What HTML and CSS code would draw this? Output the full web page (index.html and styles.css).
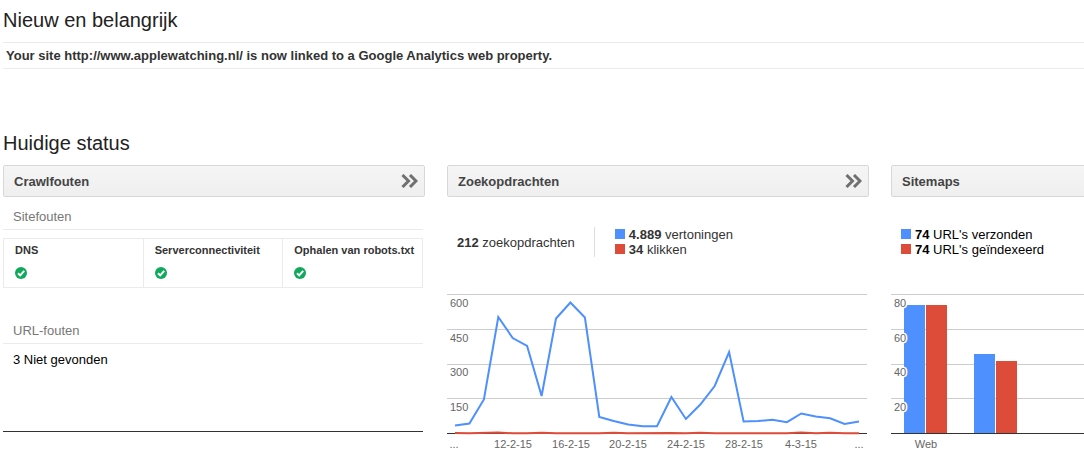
FILE: index.html
```html
<!DOCTYPE html>
<html lang="nl">
<head>
  <meta charset="UTF-8">
  <meta name="viewport" content="width=device-width, initial-scale=1.0">
  <title>Dashboard</title>
  <link rel="stylesheet" href="styles.css">
</head>
<body>
  <div class="dashboard">
    <h1>Nieuw en belangrijk</h1>
    <div class="messages">
      <a class="message" href="#">Your site http://www.applewatching.nl/ is now linked to a Google Analytics web property.</a>
    </div>

    <h1>Huidige status</h1>
    <div class="widgets">

      <!-- Crawlfouten -->
      <section class="widget">
        <a class="widget-header" href="#">
          Crawlfouten
          <svg class="arrows" width="17" height="14" viewBox="0 0 17 14">
            <path d="M1.5 1 L7.5 7 L1.5 13 M9 1 L15 7 L9 13"/>
          </svg>
        </a>
        <div class="crawl">
          <h2>Sitefouten</h2>
          <table class="site-errors">
            <tr>
              <th>DNS</th>
              <th>Serverconnectiviteit</th>
              <th>Ophalen van robots.txt</th>
            </tr>
            <tr>
              <td><svg class="check" width="12" height="12" viewBox="0 0 12 12"><circle cx="6" cy="6" r="6"/><path d="M3 6.2 L5.2 8.4 L9.2 3.8"/></svg></td>
              <td><svg class="check" width="12" height="12" viewBox="0 0 12 12"><circle cx="6" cy="6" r="6"/><path d="M3 6.2 L5.2 8.4 L9.2 3.8"/></svg></td>
              <td><svg class="check" width="12" height="12" viewBox="0 0 12 12"><circle cx="6" cy="6" r="6"/><path d="M3 6.2 L5.2 8.4 L9.2 3.8"/></svg></td>
            </tr>
          </table>
          <h2>URL-fouten</h2>
          <p class="url-errors">3 Niet gevonden</p>
        </div>
      </section>

      <!-- Zoekopdrachten -->
      <section class="widget">
        <a class="widget-header" href="#">
          Zoekopdrachten
          <svg class="arrows" width="17" height="14" viewBox="0 0 17 14">
            <path d="M1.5 1 L7.5 7 L1.5 13 M9 1 L15 7 L9 13"/>
          </svg>
        </a>
        <div class="stats">
          <div class="total"><b>212</b> zoekopdrachten</div>
          <ul class="legend">
            <li><span class="swatch blue"></span><b>4.889</b> vertoningen</li>
            <li><span class="swatch red"></span><b>34</b> klikken</li>
          </ul>
        </div>
        <svg class="chart" width="420" height="170" viewBox="0 0 420 170">
          <g class="grid">
            <path d="M0 9.5 H420 M0 44.5 H420 M0 79.5 H420 M0 113.5 H420"/>
            <path class="axis" d="M0 148.5 H420"/>
          </g>
          <polyline class="line-blue" points="8,140.5 22.4,138.5 36.9,114.5 51.3,32 65.7,53 80.1,61 94.6,111 109,33.5 123.4,17.5 137.9,32.5 152.3,132 166.7,136 181.1,139.5 195.6,141.2 210,141.2 224.4,112 238.9,134 253.3,119.5 267.7,101 282.1,67 296.6,136.5 311,136 325.4,134.8 339.9,137.2 354.3,128.5 368.7,131.5 383.1,133.3 397.6,139 412,136.5"/>
          <polyline class="line-red" points="8,148 22,148.3 51,147.5 66,148.3 80,148.3 95,147.8 109,148.3 152,148.3 167,147.8 181,148.3 224,148 239,148.3 253,147.8 268,148.3 340,148.3 354,147.5 369,148.3 383,147.8 398,148.3 412,148.3"/>
          <g class="values">
            <text x="3" y="22">600</text>
            <text x="3" y="57">450</text>
            <text x="3" y="91">300</text>
            <text x="3" y="126">150</text>
          </g>
          <g class="dates">
            <text x="7" y="163">...</text>
            <text x="66" y="163">12-2-15</text>
            <text x="124" y="163">16-2-15</text>
            <text x="181" y="163">20-2-15</text>
            <text x="239" y="163">24-2-15</text>
            <text x="297" y="163">28-2-15</text>
            <text x="354" y="163">4-3-15</text>
            <text x="412" y="163">...</text>
          </g>
        </svg>
      </section>

      <!-- Sitemaps -->
      <section class="widget">
        <a class="widget-header" href="#">
          Sitemaps
          <svg class="arrows" width="17" height="14" viewBox="0 0 17 14">
            <path d="M1.5 1 L7.5 7 L1.5 13 M9 1 L15 7 L9 13"/>
          </svg>
        </a>
        <div class="stats sitemaps">
          <ul class="legend">
            <li><span class="swatch blue"></span><b>74</b> URL's verzonden</li>
            <li><span class="swatch red"></span><b>74</b> URL's geïndexeerd</li>
          </ul>
        </div>
        <svg class="chart" width="420" height="170" viewBox="0 0 420 170">
          <g class="grid">
            <path d="M0 9.5 H420 M0 44.5 H420 M0 79.5 H420 M0 113.5 H420"/>
          </g>
          <rect class="bar-blue" x="13" y="20" width="21" height="128"/>
          <rect class="bar-red" x="35" y="20" width="21" height="128"/>
          <rect class="bar-blue" x="83" y="69" width="21" height="79"/>
          <rect class="bar-red" x="105" y="76" width="21" height="72"/>
          <g class="grid">
            <path class="axis" d="M0 148.5 H420"/>
          </g>
          <g class="values">
            <text x="3" y="22">80</text>
            <text x="3" y="57">60</text>
            <text x="3" y="91">40</text>
            <text x="3" y="126">20</text>
          </g>
          <g class="dates">
            <text x="35" y="163">Web</text>
          </g>
        </svg>
      </section>

    </div>
  </div>
</body>
</html>
```

FILE: styles.css
```css
body {
  font-family: Arial, "Liberation Sans", sans-serif;
  font-size: 13px;
  line-height: 15px;
  margin: 0;
  color: #333;
  background: #fff;
}
.dashboard {
  padding: 8px 0 0 3px;
  overflow: hidden;
}
h1 {
  margin: 0;
  font-size: 20px;
  font-weight: normal;
  line-height: 24px;
  color: #222;
}
.messages {
  margin: 10px 0 62px;
  border-top: 1px solid #ebebeb;
  border-bottom: 1px solid #ebebeb;
}
.message {
  display: block;
  padding: 5px 3px;
  font-weight: bold;
  color: #333;
  text-decoration: none;
}
.widgets {
  display: grid;
  grid-template-columns: repeat(3, minmax(422px, 1fr));
  gap: 22px;
  margin-top: 10px;
}
.widget-header {
  display: flex;
  justify-content: space-between;
  align-items: flex-start;
  padding: 8px 6px 7px 10px;
  border: 1px solid #d8d8d8;
  border-radius: 2px;
  background: linear-gradient(#f5f5f5, #efefef);
  font-weight: bold;
  color: #444;
  text-decoration: none;
}
.arrows path {
  fill: none;
  stroke: #707070;
  stroke-width: 3;
}

/* crawl errors */
.crawl {
  margin-right: 2px;
  padding: 12px 0 64px;
  border-bottom: 1px solid #333;
}
.crawl h2 {
  margin: 0;
  padding: 0 10px 5px;
  border-bottom: 1px solid #ebebeb;
  font-size: 13px;
  font-weight: normal;
  color: #777;
}
.site-errors {
  width: 100%;
  margin: 8px 0 35px;
  border: 1px solid #ebebeb;
  border-collapse: collapse;
  table-layout: fixed;
}
.site-errors th,
.site-errors td {
  padding: 4px 0 3px 11px;
  border-left: 1px solid #ebebeb;
  font-size: 11px;
  text-align: left;
  white-space: nowrap;
}
.site-errors td {
  padding: 6px 0 8px 11px;
}
.check {
  display: block;
}
.check circle {
  fill: #0fa95c;
}
.check path {
  fill: none;
  stroke: #fff;
  stroke-width: 2;
}
.url-errors {
  margin: 8px 10px 0;
  color: #000;
}

/* numbers above the charts */
.stats {
  display: flex;
  align-items: center;
  padding: 30px 10px 28px;
}
.total {
  padding-right: 19px;
}
.legend {
  margin: 0;
  padding: 0 0 0 20px;
  border-left: 1px solid #ddd;
  list-style: none;
}
.sitemaps {
  color: #000;
}
.sitemaps .legend {
  padding-left: 0;
  border-left: none;
}
.swatch {
  display: inline-block;
  width: 10px;
  height: 10px;
  margin-right: 4px;
}
.blue {
  background: #4d90fe;
}
.red {
  background: #dd4b39;
}

/* charts */
.chart {
  display: block;
}
.grid path {
  stroke: #ccc;
  shape-rendering: crispEdges;
}
.grid .axis {
  stroke: #333;
}
.line-blue,
.line-red {
  fill: none;
  stroke: #4d90fe;
  stroke-width: 2;
}
.line-red {
  stroke: #dd4b39;
}
.bar-blue {
  fill: #4d90fe;
}
.bar-red {
  fill: #dd4b39;
}
.chart text {
  font-size: 11px;
  fill: #666;
}
.values text {
  stroke: #fff;
  stroke-width: 3;
  paint-order: stroke;
}
.dates text {
  text-anchor: middle;
}
```
